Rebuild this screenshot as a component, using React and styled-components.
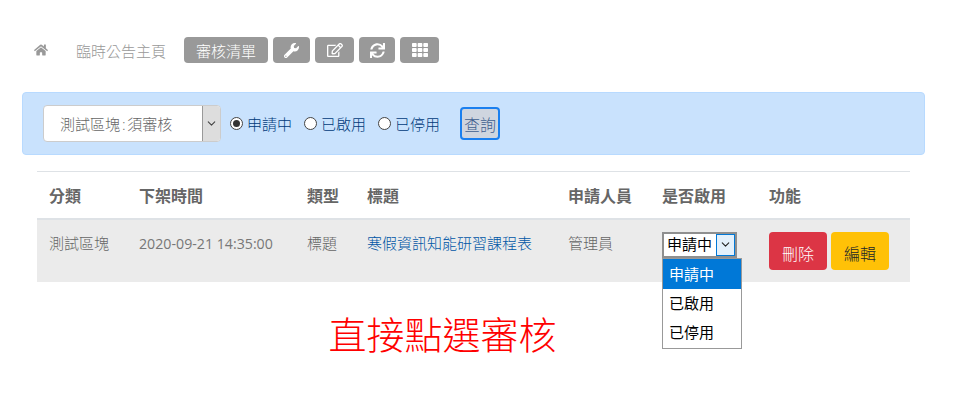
import React from "react";
import styled, { createGlobalStyle } from "styled-components";
import { FaHome, FaWrench, FaRegEdit, FaSync, FaTh } from "react-icons/fa";
import { LuChevronDown } from "react-icons/lu";

const Global = createGlobalStyle`
  html, body { margin: 0; padding: 0; background: #fff; }
  body { font-family: "Open Sans", "Noto Sans CJK TC", sans-serif; font-size: 15px; color: #666; }
`;
const CJK = `"Open Sans", "Noto Sans CJK TC", sans-serif`;

const Page = styled.div`
  width: 966px; height: 401px; overflow: hidden; box-sizing: border-box;
  padding: 37px 41px 0 22px;
`;
const Toolbar = styled.nav`
  display: flex; align-items: center; height: 26px; padding-left: 12px; margin-bottom: 29px;
`;
const HomeLink = styled.a`
  display: flex; color: #999; font-size: 14px; width: 42px;
`;
const Crumb = styled.a`
  color: #999; font-size: 15px; font-weight: 300; width: 108px; white-space: nowrap;
`;
const ToolGroup = styled.div`
  display: flex; gap: 5px;
`;
const ToolButton = styled.button`
  height: 26px; width: ${p => p.$w}px; padding: 0; border: 0; border-radius: 4px;
  background: #999; color: #fff; font-family: ${CJK}; font-size: 15px; font-weight: 300;
  display: flex; align-items: center; justify-content: center;
  svg { font-size: ${p => p.$icon || 15}px; }
`;
const Filter = styled.form`
  display: flex; align-items: center; height: 63px; box-sizing: border-box;
  padding-left: 20px; background: #c9e2fd; border: 1px solid #b8daff; border-radius: 4px;
  margin-bottom: 16px;
`;
const SelectBox = styled.div`
  display: flex; width: 178px; height: 37px; box-sizing: border-box; border: 1px solid #ccc;
  border-radius: 4px; background: #fff; overflow: hidden; margin-right: 9px;
`;
const SelectText = styled.span`
  flex: 1; padding-left: 16px; line-height: 36px; font-size: 15px; font-weight: 300; color: #666; white-space: nowrap;
  word-spacing: -2px;
`;
const SelectArrow = styled.span`
  width: 18px; box-sizing: border-box; background: #ddd; border-left: 1px solid #999; display: flex;
  align-items: center; justify-content: center; color: #444; font-size: 13px;
`;
const RadioLabel = styled.label`
  display: flex; align-items: center; color: #003a7a; font-size: 15px; font-weight: 300; margin-right: ${p => p.$mr}px;
  white-space: nowrap;
`;
const RadioDot = styled.span`
  width: 13px; height: 13px; box-sizing: border-box; border-radius: 50%; border: 1px solid #444;
  background: #fff; margin-right: 4px; display: flex; align-items: center; justify-content: center;
  &::after { content: ""; width: 7px; height: 7px; border-radius: 50%; background: ${p => p.$on ? "#333" : "transparent"}; }
`;
const QueryButton = styled.button`
  width: 40px; height: 33px; padding: 0; margin-left: 8px; background: #cfd5df; border: 2px solid #1a7fef; border-radius: 4px;
  color: #3f5f8f; font-family: ${CJK}; font-size: 16px; font-weight: 300;
`;
const TableWrap = styled.div`
  margin: 0 15px;
`;
const Table = styled.table`
  width: 873px; table-layout: fixed; border-collapse: collapse; border-top: 1px solid #dee2e6;
`;
const Th = styled.th`
  width: ${p => p.$w}px; height: 47px; box-sizing: border-box; padding: 0 12px; text-align: left; font-size: 16px;
  font-weight: 700; color: #666; border-bottom: 2px solid #dee2e6; white-space: nowrap;
`;
const Td = styled.td`
  height: 62px; box-sizing: border-box; padding: 12px; vertical-align: top; background: #ebebeb; font-size: 15px;
  font-weight: 300; line-height: 23px; color: #666; white-space: nowrap;
`;
const DateText = styled.span`
  font-size: 14.2px; font-weight: 400; color: #777;
`;
const TitleLink = styled.a`
  color: #0056a6; font-size: 15px; font-weight: 300;
`;
const StatusCell = styled.div`
  position: relative; width: 75px;
`;
const StatusSelect = styled.div`
  display: flex; height: 26px; box-sizing: border-box; border: 2px solid #8f8f8f; background: #fff;
  align-items: center; justify-content: space-between; color: #000; font-size: 15px; font-weight: 400; padding-left: 3px;
`;
const StatusArrow = styled.span`
  width: 19px; height: 22px; box-sizing: border-box; border: 1px solid #0078d7; background: #e3f0fb; display: flex;
  align-items: center; justify-content: center; color: #222; font-size: 13px;
`;
const Menu = styled.ul`
  position: absolute; left: 0; top: 26px; width: 80px; box-sizing: border-box; margin: 0; padding: 0;
  list-style: none; background: #fff; border: 1px solid #999;
`;
const MenuItem = styled.li`
  height: ${p => p.$on ? 30 : 29.5}px; line-height: ${p => p.$on ? 30 : 29.5}px; padding-left: 6px; font-size: 15px;
  font-weight: 400; background: ${p => p.$on ? "#0078d7" : "#fff"}; color: ${p => p.$on ? "#fff" : "#000"};
`;
const Actions = styled.div`
  display: flex; gap: 4px;
`;
const ActionButton = styled.button`
  width: 58px; height: 38px; padding: 4px 0 0; border: 0; border-radius: 4px; font-family: ${CJK}; font-size: 16px; font-weight: 300;
  background: ${p => p.$bg}; color: ${p => p.$fg};
`;
const Notice = styled.div`
  margin-top: 28px; text-align: center; padding-right: 62px; color: #f00; font-size: 38px; line-height: 46px;
  font-family: "Noto Sans CJK TC", serif; font-weight: 300; white-space: nowrap;
`;

const cols = [90, 168, 60, 201, 94, 107, 153];
const heads = ["分類", "下架時間", "類型", "標題", "申請人員", "是否啟用", "功能"];

export default function App() {
  return (
    <Page>
      <Global />
      <Toolbar>
        <HomeLink><FaHome /></HomeLink>
        <Crumb>臨時公告主頁</Crumb>
        <ToolGroup>
          <ToolButton $w={84}>審核清單</ToolButton>
          <ToolButton $w={37} $icon={15}><FaWrench /></ToolButton>
          <ToolButton $w={39} $icon={16}><FaRegEdit /></ToolButton>
          <ToolButton $w={36} $icon={15}><FaSync /></ToolButton>
          <ToolButton $w={39} $icon={16}><FaTh /></ToolButton>
        </ToolGroup>
      </Toolbar>
      <Filter>
        <SelectBox>
          <SelectText>測試區塊 : 須審核</SelectText>
          <SelectArrow><LuChevronDown /></SelectArrow>
        </SelectBox>
        <RadioLabel $mr={12}><RadioDot $on />申請中</RadioLabel>
        <RadioLabel $mr={12}><RadioDot />已啟用</RadioLabel>
        <RadioLabel $mr={12}><RadioDot />已停用</RadioLabel>
        <QueryButton type="button">查詢</QueryButton>
      </Filter>
      <TableWrap>
        <Table>
          <thead>
            <tr>{heads.map((h, i) => <Th key={h} $w={cols[i]}>{h}</Th>)}</tr>
          </thead>
          <tbody>
            <tr>
              <Td>測試區塊</Td>
              <Td><DateText>2020-09-21 14:35:00</DateText></Td>
              <Td>標題</Td>
              <Td><TitleLink>寒假資訊知能研習課程表</TitleLink></Td>
              <Td>管理員</Td>
              <Td>
                <StatusCell>
                  <StatusSelect>申請中<StatusArrow><LuChevronDown /></StatusArrow></StatusSelect>
                  <Menu>
                    <MenuItem $on>申請中</MenuItem>
                    <MenuItem>已啟用</MenuItem>
                    <MenuItem>已停用</MenuItem>
                  </Menu>
                </StatusCell>
              </Td>
              <Td>
                <Actions>
                  <ActionButton $bg="#dc3545" $fg="#fff">刪除</ActionButton>
                  <ActionButton $bg="#ffc107" $fg="#212529">編輯</ActionButton>
                </Actions>
              </Td>
            </tr>
          </tbody>
        </Table>
      </TableWrap>
      <Notice>直接點選審核</Notice>
    </Page>
  );
}
